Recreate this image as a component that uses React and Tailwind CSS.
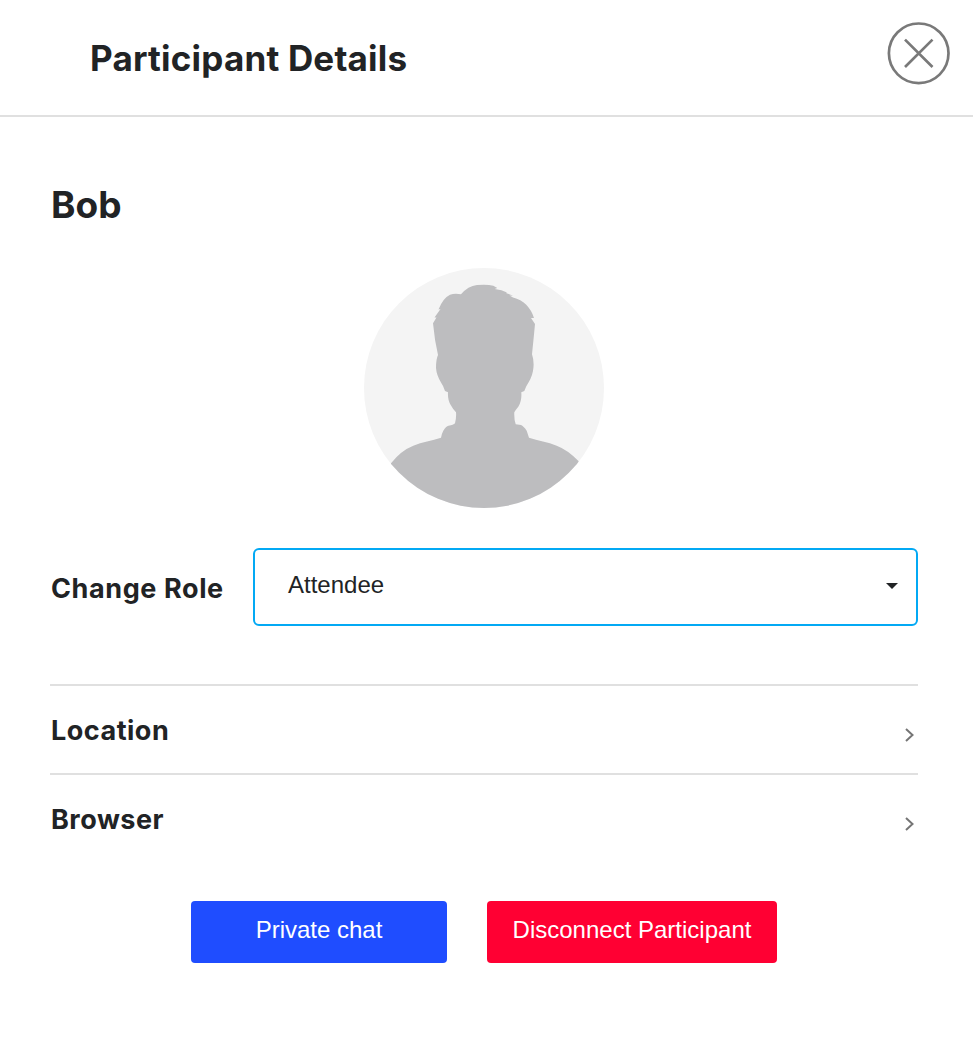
import React from "react";

const details = [{ title: "Location" }, { title: "Browser" }];

const Avatar = () => (
  <svg
    viewBox="0 0 240 240"
    className="block w-[240px] h-[240px] rounded-full bg-[#f4f4f4]"
  >
    <path
      fill="#bdbdbf"
      d="M27 195.3Q37 182.5 49.3 177.7C58 174 68 172.500 77 169.700Q78 165 79.300 162.700Q82 158 84.500 157.700Q89.500 157 91 155.300Q92.500 149 92 144.300Q88.500 140.500 86.700 137Q83.500 132 84 124.300L81 123Q79.500 118 77 114.500Q72.500 107 72 100Q72 91 74 87Q70.500 72 69 55.300L72.500 49.500L70.500 49.500L76.500 41L74.500 41.500Q79 30 86 26.700Q91 25 97 26.300Q104 18 113 17Q123 16 129.300 17.700L133.300 20L130.700 21Q138 21.500 143 24.500L142 25L149 27.700L145.500 27.500L149 29.500Q157 31.500 162 36.500Q167.500 42 170 50L167 50L171 56Q169.500 72 168 86.300Q170 92 169.500 99Q169 107 164.500 114.500Q162 118 160.300 123L157.300 124.300Q158 133 154.300 138.700Q151.500 142 150.300 144.300Q150 152 151.700 156.300L157 157Q159.500 158 162.700 162.700L165 169.700C174 172.500 184 174 192.700 177.700Q204 182 214.700 193.300V240H27Z"
    />
  </svg>
);

const App = () => {
  return (
    <div className="w-full min-h-screen bg-white text-[#212325] font-['Inter',sans-serif]">
      <header className="flex items-start justify-between h-[117px] pl-[90px] pr-[23px] border-b-2 border-[#e0e0e0]">
        <h1 className="mt-[34px] text-[35px] leading-[48px] font-bold tracking-[0.2px]">
          Participant Details
        </h1>
        <button className="mt-[22px]" aria-label="Close">
          <svg
            width="63"
            height="63"
            viewBox="0 0 63 63"
            fill="none"
            stroke="#797979"
            strokeWidth="2.700"
          >
            <circle cx="31.700" cy="31.300" r="29.800" />
            <path d="M18 17.600L45.500 45M45.500 17.600L18 45" />
          </svg>
        </button>
      </header>

      <main className="pl-[50px] pr-[55px]">
        <h2 className="pt-[64px] pl-px text-[37px] leading-[48px] font-bold">
          Bob
        </h2>
        <div className="flex justify-center mt-[39px]">
          <Avatar />
        </div>

        <div className="flex items-center mt-[40px]">
          <div className="w-[203px] pt-1 pl-px text-[27px] font-bold tracking-[0.6px]">
            Change Role
          </div>
          <button className="flex flex-1 items-center justify-between h-[78px] pl-[33px] pr-[18px] pb-1 border-2 border-[#03a9f4] rounded-md text-2xl font-['Liberation_Sans',sans-serif]">
            <span>Attendee</span>
            <svg width="12" height="6" viewBox="0 0 12 6" className="mt-0.5">
              <path d="M0 0H12L6 6Z" fill="#212325" />
            </svg>
          </button>
        </div>

        <div className="mt-[58px]">
          {details.map((item) => (
            <div
              key={item.title}
              className="flex items-center justify-between h-[89px] pr-1 border-t-2 border-[#e0e0e0]"
            >
              <div className="pt-[3px] pl-px text-[27px] font-bold tracking-[0.5px]">
                {item.title}
              </div>
              <svg
                width="9"
                height="14"
                viewBox="0 0 9 14"
                fill="none"
                stroke="#757575"
                strokeWidth="2"
                className="mt-2.5"
              >
                <path d="M1 1L7.500 7L1 13" />
              </svg>
            </div>
          ))}
        </div>

        <div className="flex justify-center gap-10 mt-[39px] text-2xl text-white font-['Liberation_Sans',sans-serif]">
          <button className="w-[256px] h-[62px] pb-1 rounded bg-[#1f4dff]">
            Private chat
          </button>
          <button className="w-[290px] h-[62px] pb-1 rounded bg-[#ff0033]">
            Disconnect Participant
          </button>
        </div>
      </main>
    </div>
  );
};

export default App;
